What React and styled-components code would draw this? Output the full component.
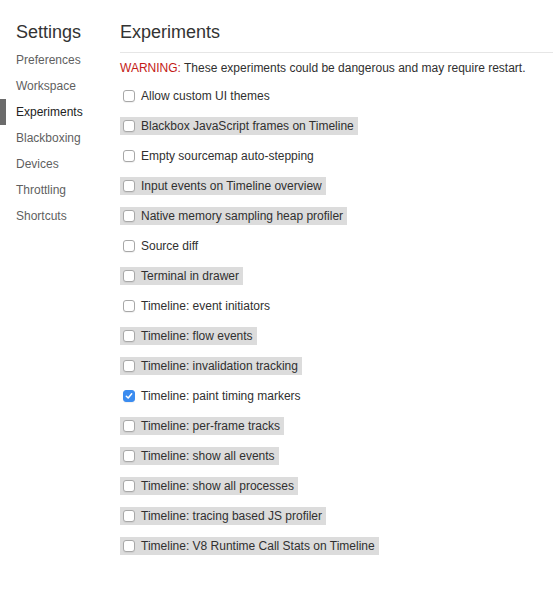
import styled, { createGlobalStyle } from "styled-components";

const GlobalStyle = createGlobalStyle`
  body {
    margin: 0;
    background: #ffffff;
    font-family: "Liberation Sans", Arial, sans-serif;
    color: #303030;
  }
`;

const Page = styled.div`
  display: flex;
  width: 553px;
  height: 598px;
  overflow: hidden;
`;

const Sidebar = styled.nav`
  width: 120px;
  flex-shrink: 0;
  display: flex;
  flex-direction: column;
`;

const Title = styled.h1`
  margin: 0;
  padding: 21px 0 0 ${(p) => p.$indent || 0}px;
  font-size: 18px;
  line-height: 22px;
  font-weight: normal;
  color: #333;
`;

const NavList = styled.ul`
  list-style: none;
  margin: 4px 0 0;
  padding: 0;
`;

const NavItem = styled.li`
  position: relative;
  height: 26px;
  line-height: 26px;
  padding-left: 16px;
  font-size: 12px;
  color: ${(p) => (p.$active ? "#222" : "#5f5f5f")};

  &::before {
    content: "";
    display: ${(p) => (p.$active ? "block" : "none")};
    position: absolute;
    left: 0;
    top: 0;
    width: 6px;
    height: 26px;
    background: #6b6b6b;
  }
`;

const Main = styled.main`
  flex: 1;
  display: flex;
  flex-direction: column;
`;

const Header = styled.div`
  height: 52px;
  border-bottom: 1px solid #e6e6e6;
`;

const Warning = styled.p`
  margin: 8px 0 0;
  font-size: 12px;
  line-height: 14px;
  color: #303030;
`;

const WarningLabel = styled.span`
  color: #c41a16;
`;

const List = styled.div`
  margin-top: 12px;
  display: flex;
  flex-direction: column;
  align-items: flex-start;
  gap: 12px;
`;

const Row = styled.label`
  display: inline-flex;
  align-items: center;
  gap: 6px;
  height: 18px;
  padding: 0 4px 0 3px;
  font-size: 12px;
  color: #303030;
  background: ${(p) => (p.$unstable ? "#dcdcdc" : "transparent")};
`;

const Box = styled.span`
  width: 12px;
  height: 12px;
  box-sizing: border-box;
  border-radius: 3px;
  border: 1px solid ${(p) => (p.$checked ? "#3b8cf0" : "#a8a8a8")};
  background: ${(p) => (p.$checked ? "#3b8cf0" : "#fff")};
  box-shadow: 0 1px 1px rgba(0, 0, 0, 0.06);
  display: flex;
  align-items: center;
  justify-content: center;
`;

const sections = [
  "Preferences",
  "Workspace",
  "Experiments",
  "Blackboxing",
  "Devices",
  "Throttling",
  "Shortcuts",
];

const experiments = [
  { name: "Allow custom UI themes" },
  { name: "Blackbox JavaScript frames on Timeline", unstable: true },
  { name: "Empty sourcemap auto-stepping" },
  { name: "Input events on Timeline overview", unstable: true },
  { name: "Native memory sampling heap profiler", unstable: true },
  { name: "Source diff" },
  { name: "Terminal in drawer", unstable: true },
  { name: "Timeline: event initiators" },
  { name: "Timeline: flow events", unstable: true },
  { name: "Timeline: invalidation tracking", unstable: true },
  { name: "Timeline: paint timing markers", checked: true },
  { name: "Timeline: per-frame tracks", unstable: true },
  { name: "Timeline: show all events", unstable: true },
  { name: "Timeline: show all processes", unstable: true },
  { name: "Timeline: tracing based JS profiler", unstable: true },
  { name: "Timeline: V8 Runtime Call Stats on Timeline", unstable: true },
];

function Checkbox({ checked }) {
  return (
    <Box $checked={checked}>
      {checked && (
        <svg width="8" height="8" viewBox="0 0 8 8">
          <path
            d="M1.3 4.2 L3.2 6 L6.7 1.8"
            fill="none"
            stroke="#fff"
            strokeWidth="1.5"
            strokeLinecap="round"
            strokeLinejoin="round"
          />
        </svg>
      )}
    </Box>
  );
}

export default function App() {
  return (
    <>
      <GlobalStyle />
      <Page>
        <Sidebar>
          <Title $indent={16}>Settings</Title>
          <NavList>
            {sections.map((s) => (
              <NavItem key={s} $active={s === "Experiments"}>
                {s}
              </NavItem>
            ))}
          </NavList>
        </Sidebar>
        <Main>
          <Header>
            <Title>Experiments</Title>
          </Header>
          <Warning>
            <WarningLabel>WARNING:</WarningLabel> These experiments could be
            dangerous and may require restart.
          </Warning>
          <List>
            {experiments.map((e) => (
              <Row key={e.name} $unstable={e.unstable}>
                <Checkbox checked={e.checked} />
                {e.name}
              </Row>
            ))}
          </List>
        </Main>
      </Page>
    </>
  );
}
